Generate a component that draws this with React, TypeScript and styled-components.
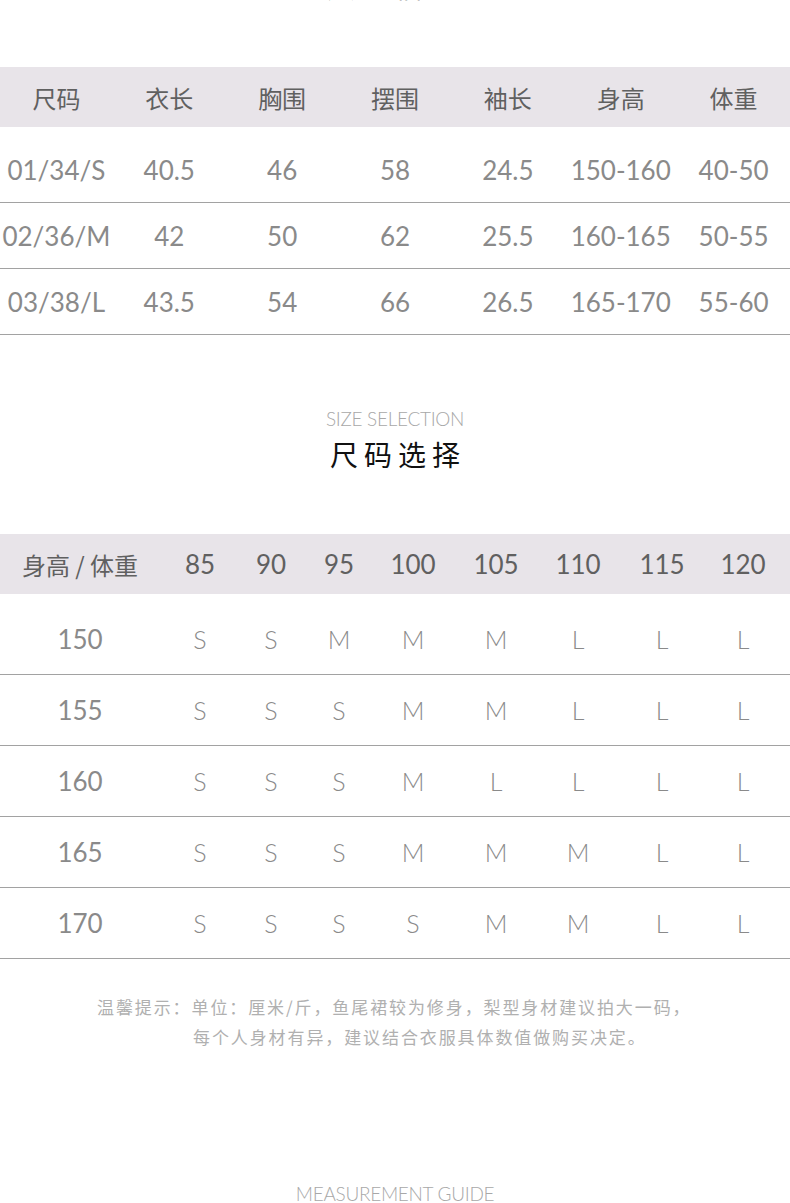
import React from "react";
import styled, { createGlobalStyle } from "styled-components";

const Global = createGlobalStyle`
  html, body { margin: 0; padding: 0; background: #fff; }
  body { width: 790px; overflow: hidden; font-family: "Noto Sans CJK SC", "Noto Sans", sans-serif; }
`;

const Page = styled.div`
  width: 790px;
  height: 1203px;
  overflow: hidden;
  display: flex;
  flex-direction: column;
`;

const CutTitle = styled.div`
  margin-top: -34px;
  height: 40px;
  line-height: 40px;
  text-align: center;
  font-size: 28px;
  letter-spacing: 6px;
  color: #111;
`;

const SectionHead = styled.div<{ $top: number }>`
  margin-top: ${(p) => p.$top}px;
  display: flex;
  flex-direction: column;
  align-items: center;
`;

const EnTitle = styled.div`
  font-family: "Lato", "Noto Sans", sans-serif;
  font-weight: 300;
  font-size: 19px;
  line-height: 24px;
  color: #a8a8a8;
  letter-spacing: -0.3px;
`;

const CnTitle = styled.div`
  margin-top: 5px;
  font-size: 28px;
  line-height: 36px;
  letter-spacing: 6px;
  padding-left: 6px;
  color: #111;
`;

const Table = styled.div<{ $top: number }>`
  margin-top: ${(p) => p.$top}px;
  display: flex;
  flex-direction: column;
`;

const HeadRow = styled.div<{ $cols: string }>`
  display: grid;
  grid-template-columns: ${(p) => p.$cols};
  height: 60px;
  align-items: center;
  background: #e8e4e9;
  margin-bottom: 10px;
`;

const HeadCell = styled.div<{ $num?: boolean }>`
  text-align: center;
  font-size: ${(p) => (p.$num ? "26px" : "24px")};
  font-family: ${(p) =>
    p.$num ? `"Lato", "Noto Sans", sans-serif` : `"Noto Sans CJK SC", sans-serif`};
  color: #606060;
  white-space: nowrap;
`;

const BodyRow = styled.div<{ $cols: string; $h: number }>`
  display: grid;
  grid-template-columns: ${(p) => p.$cols};
  height: ${(p) => p.$h}px;
  align-items: center;
  border-bottom: 1px solid #a2a2a2;
`;

const Cell = styled.div<{ $light?: boolean }>`
  text-align: center;
  font-family: "Lato", "Noto Sans", sans-serif;
  font-weight: ${(p) => (p.$light ? 300 : 400)};
  font-size: ${(p) => (p.$light ? "25px" : "26px")};
  color: #8a8a8a;
  white-space: nowrap;
`;

const Notes = styled.div`
  margin-top: 33px;
  padding-left: 97px;
  display: flex;
  flex-direction: column;
  font-size: 17px;
  line-height: 30px;
  letter-spacing: 1.9px;
  color: #b0b0b0;
`;

const NoteLine = styled.div<{ $indent?: number }>`
  padding-left: ${(p) => p.$indent || 0}px;
  white-space: nowrap;
`;

const Footer = styled.div`
  margin-top: 130px;
  text-align: center;
  font-family: "Lato", "Noto Sans", sans-serif;
  font-weight: 300;
  font-size: 19px;
  line-height: 24px;
  color: #a8a8a8;
  letter-spacing: -0.3px;
`;

const t1Cols = "repeat(7, 1fr)";
const t1Head = ["尺码", "衣长", "胸围", "摆围", "袖长", "身高", "体重"];
const t1Rows = [
  ["01/34/S", "40.5", "46", "58", "24.5", "150-160", "40-50"],
  ["02/36/M", "42", "50", "62", "25.5", "160-165", "50-55"],
  ["03/38/L", "43.5", "54", "66", "26.5", "165-170", "55-60"],
];

const t2Cols = "160px 80px 62px 74px 74px 92px 72px 96px 66px";
const t2Head = ["85", "90", "95", "100", "105", "110", "115", "120"];
const t2Rows = [
  ["150", "S", "S", "M", "M", "M", "L", "L", "L"],
  ["155", "S", "S", "S", "M", "M", "L", "L", "L"],
  ["160", "S", "S", "S", "M", "L", "L", "L", "L"],
  ["165", "S", "S", "S", "M", "M", "M", "L", "L"],
  ["170", "S", "S", "S", "S", "M", "M", "L", "L"],
];

export default function App() {
  return (
    <Page>
      <Global />
      <CutTitle>尺码信息</CutTitle>

      <Table $top={61}>
        <HeadRow $cols={t1Cols}>
          {t1Head.map((h) => (
            <HeadCell key={h}>{h}</HeadCell>
          ))}
        </HeadRow>
        {t1Rows.map((r, i) => (
          <BodyRow key={i} $cols={t1Cols} $h={65}>
            {r.map((c, j) => (
              <Cell key={j}>{c}</Cell>
            ))}
          </BodyRow>
        ))}
      </Table>

      <SectionHead $top={72}>
        <EnTitle>SIZE SELECTION</EnTitle>
        <CnTitle>尺码选择</CnTitle>
      </SectionHead>

      <Table $top={62}>
        <HeadRow $cols={t2Cols}>
          <HeadCell>身高 / 体重</HeadCell>
          {t2Head.map((h) => (
            <HeadCell key={h} $num>
              {h}
            </HeadCell>
          ))}
        </HeadRow>
        {t2Rows.map((r, i) => (
          <BodyRow key={i} $cols={t2Cols} $h={70}>
            {r.map((c, j) => (
              <Cell key={j} $light={j > 0}>
                {c}
              </Cell>
            ))}
          </BodyRow>
        ))}
      </Table>

      <Notes>
        <NoteLine>温馨提示：单位：厘米/斤，鱼尾裙较为修身，梨型身材建议拍大一码，</NoteLine>
        <NoteLine $indent={96}>每个人身材有异，建议结合衣服具体数值做购买决定。</NoteLine>
      </Notes>

      <Footer>MEASUREMENT GUIDE</Footer>
    </Page>
  );
}
